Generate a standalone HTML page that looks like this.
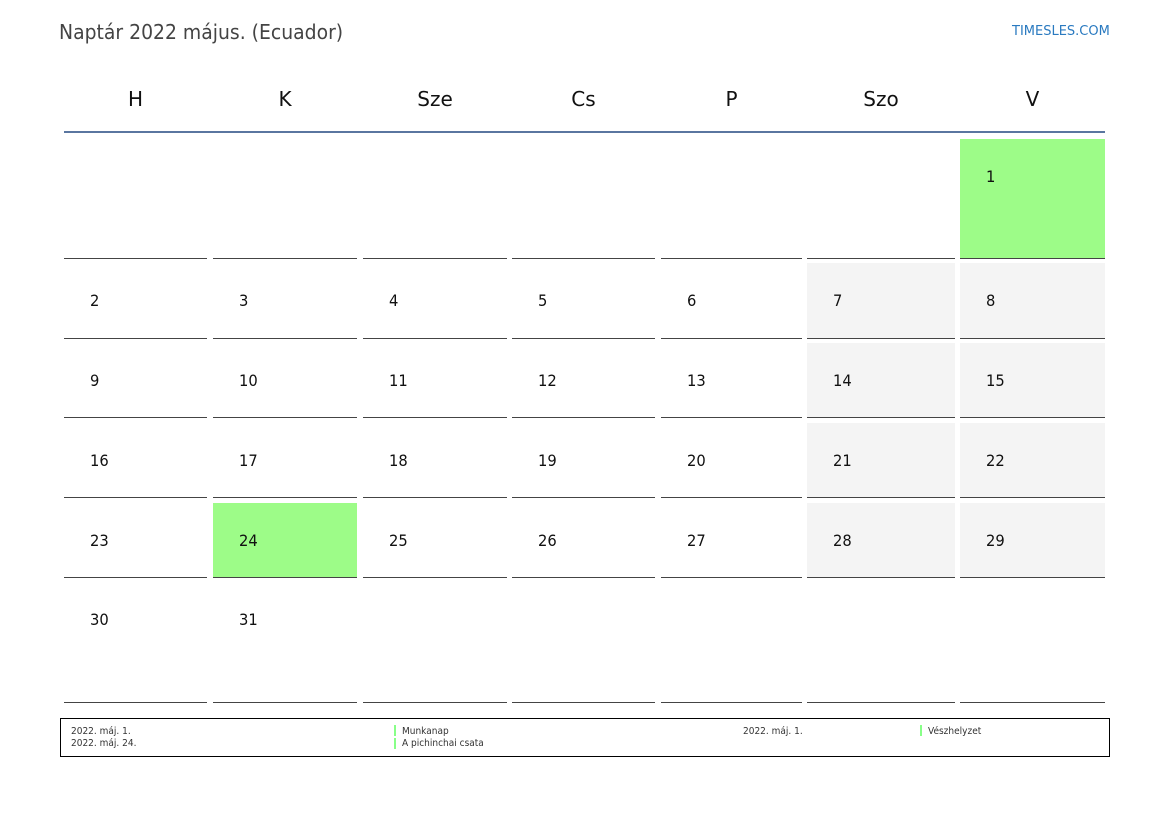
<!DOCTYPE html>
<html><head><meta charset="utf-8"><style>
body{margin:0;width:1169px;height:827px;background:#fff;position:relative;font-family:"DejaVu Sans","Liberation Sans",sans-serif;overflow:hidden}
.a{position:absolute}
.t{left:59px;top:20px;font-size:20px;color:#444;transform:scaleX(.94);transform-origin:left}
.l{left:1012px;top:24px;font-size:13px;color:#2a7ac0}
.h{top:87px;font-size:20px;color:#111;text-align:center}
.c{border-bottom:1.5px solid #444;box-sizing:border-box}
.n{font-size:16px;color:#111;transform:scaleX(.92);transform-origin:left}
.lg{font-size:10px;color:#333;transform:scaleX(.9);transform-origin:left}
.gb{width:2px;height:11px;background:#8f8}
</style></head><body>
<div class="a t">Naptár 2022 május. (Ecuador)</div>
<div class="a l">TIMESLES.COM</div>
<div id="g"></div>
<div class="a" style="left:64px;top:131px;width:1041px;height:2px;background:#5a76a0"></div>
<div class="a" style="left:60px;top:718px;width:1050px;height:39px;border:1px solid #000;box-sizing:border-box"></div>
<div class="a lg" style="left:71px;top:726px">2022. máj. 1.</div>
<div class="a lg" style="left:71px;top:738px">2022. máj. 24.</div>
<div class="a gb" style="left:394px;top:725px"></div>
<div class="a gb" style="left:394px;top:738px"></div>
<div class="a lg" style="left:402px;top:726px">Munkanap</div>
<div class="a lg" style="left:402px;top:738px">A pichinchai csata</div>
<div class="a lg" style="left:743px;top:726px">2022. máj. 1.</div>
<div class="a gb" style="left:920px;top:725px"></div>
<div class="a lg" style="left:928px;top:726px">Vészhelyzet</div>
<script>
var cols=[[64,207],[213,357],[363,507],[512,655],[661,802],[807,955],[960,1105]];
var rows=[[139,259],[263,339],[343,418],[423,498],[503,578],[582,703]];
var hd=["H","K","Sze","Cs","P","Szo","V"];
var h="";
cols.forEach(function(c,i){h+='<div class="a h" style="left:'+c[0]+'px;width:'+(c[1]-c[0])+'px">'+hd[i]+'</div>';});
rows.forEach(function(r,ri){cols.forEach(function(c,ci){
 var idx=ri*7+ci, day=idx-5;
 var bg="transparent";
 if(day==1||day==24)bg="#9dfc88";else if(ci>=5&&day>=1&&day<=31&&ri<5)bg="#f4f4f4";
 h+='<div class="a c" style="left:'+c[0]+'px;top:'+r[0]+'px;width:'+(c[1]-c[0])+'px;height:'+(r[1]-r[0])+'px;background:'+bg+'"></div>';
 if(day>=1&&day<=31)h+='<div class="a n" style="left:'+(c[0]+26)+'px;top:'+(r[0]+28)+'px">'+day+'</div>';
});});
document.getElementById("g").innerHTML=h;
</script>
</body></html>
